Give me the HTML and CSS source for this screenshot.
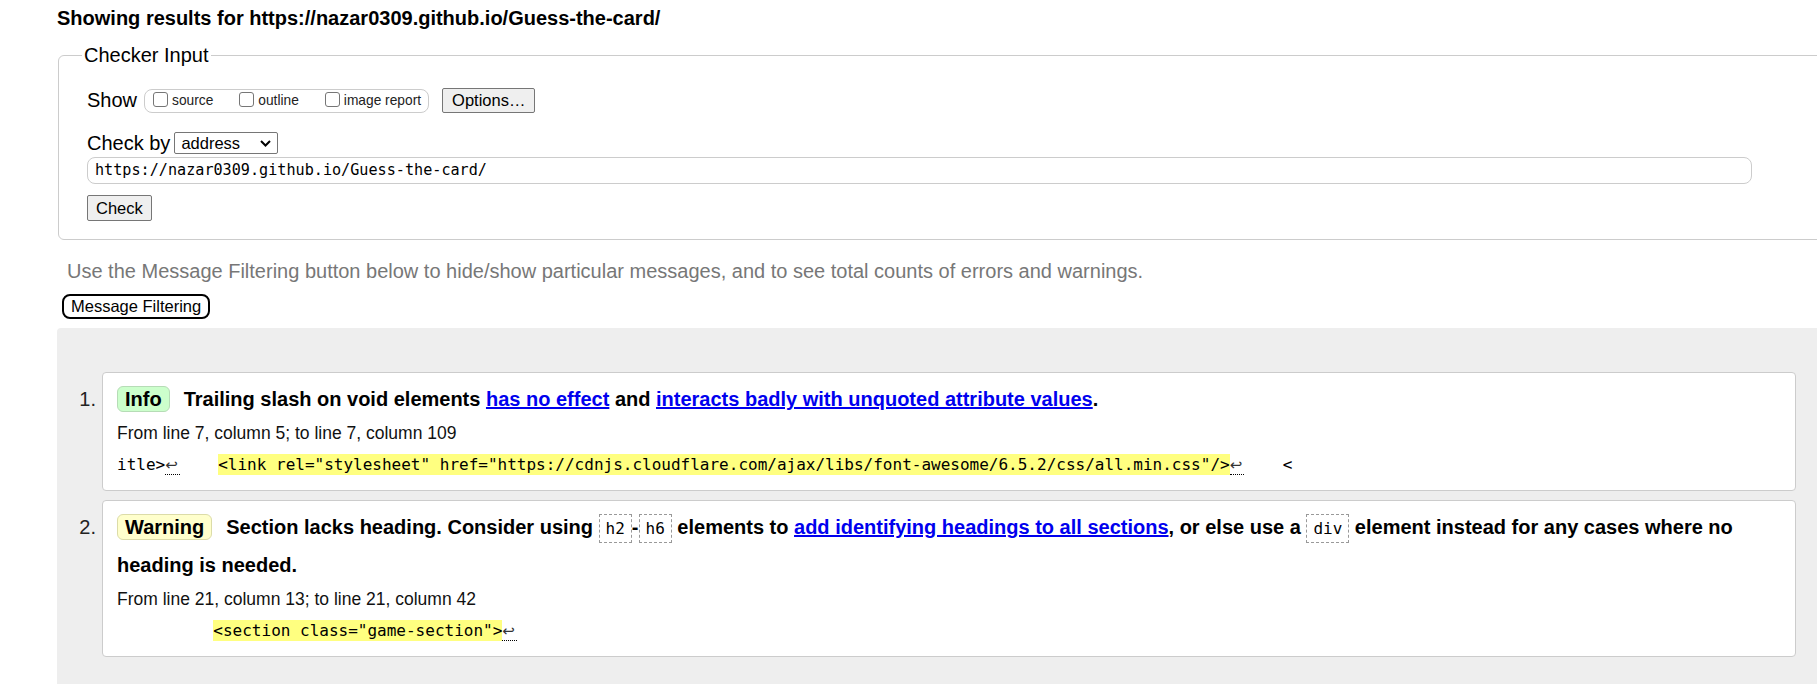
FILE: index.html
```html
<!DOCTYPE html>
<html lang="en">
<head>
<meta charset="utf-8">
<title>Showing results for https://nazar0309.github.io/Guess-the-card/</title>
<link rel="stylesheet" href="styles.css">
</head>
<body>
<div class="page">
  <h2 class="title">Showing results for https://nazar0309.github.io/Guess-the-card/</h2>
  <form class="checker-form">
    <fieldset class="checker">
      <legend class="legend">Checker Input</legend>
      <div class="row show-row">
        <span class="lbl">Show</span>
        <span class="group">
          <label class="opt"><input type="checkbox" class="cb">source</label>
          <label class="opt"><input type="checkbox" class="cb">outline</label>
          <label class="opt last"><input type="checkbox" class="cb">image report</label>
        </span>
        <button type="button" class="btn options">Options…</button>
      </div>
      <div class="row by-row">
        <span class="lbl">Check by</span>
        <span class="select"><span class="select-text">address</span><svg class="chev" width="11" height="7" viewBox="0 0 11 7"><path d="M1 1 L5.5 5.5 L10 1" fill="none" stroke="#000" stroke-width="2"/></svg></span>
      </div>
      <div class="url">https://nazar0309.github.io/Guess-the-card/</div>
      <button type="button" class="btn check">Check</button>
    </fieldset>
  </form>
  <p class="hint">Use the Message Filtering button below to hide/show particular messages, and to see total counts of errors and warnings.</p>
  <button type="button" class="filter">Message Filtering</button>
  <div class="results">
    <ol class="list">
      <li class="item">
        <span class="num">1.</span>
        <div class="msg">
          <p class="head"><span class="badge info">Info</span>Trailing slash on void elements <a class="link" href="#">has no effect</a> and <a class="link" href="#">interacts badly with unquoted attribute values</a>.</p>
          <p class="loc">From line 7, column 5; to line 7, column 109</p>
          <p class="extract">itle&gt;<span class="lf">↩</span>    <mark class="hl">&lt;link rel="stylesheet" href="https://cdnjs.cloudflare.com/ajax/libs/font-awesome/6.5.2/css/all.min.css"/&gt;</mark><span class="lf">↩</span>    &lt;</p>
        </div>
      </li>
      <li class="item">
        <span class="num">2.</span>
        <div class="msg">
          <p class="head"><span class="badge warning">Warning</span>Section lacks heading. Consider using <code class="tag">h2</code>-<code class="tag">h6</code> elements to <a class="link" href="#">add identifying headings to all sections</a>, or else use a <code class="tag">div</code> element instead for any cases where no heading is needed.</p>
          <p class="loc">From line 21, column 13; to line 21, column 42</p>
          <p class="extract">          <mark class="hl">&lt;section class="game-section"&gt;</mark><span class="lf">↩</span></p>
        </div>
      </li>
    </ol>
  </div>
</div>
</body>
</html>
```
FILE: styles.css
```css
* { box-sizing: border-box; }
html, body { margin: 0; padding: 0; background: #fff; overflow: hidden; }
body { font-family: "Liberation Sans", Arial, sans-serif; color: #000; }

.page { width: 1857px; padding: 7px 0 0 57px; }

.title { font-size: 20px; line-height: 23px; font-weight: bold; margin: 0 0 14px 0; }

.checker-form { margin: 0; }
.checker { margin: 0 0 0 1px; border: 1px solid #ccc; border-radius: 6px; padding: 21px 104px 18px 28px; min-width: 0; }
.legend { font-size: 20px; line-height: 23px; padding: 0 2px; margin-left: -5px; color: #000; }

.row { display: flex; align-items: center; }
.lbl { font-size: 20px; line-height: 23px; }
.show-row { height: 25px; }
.show-row .lbl { margin-right: 7px; }
.group { display: inline-flex; align-items: center; height: 24px; border: 1px solid #ccc; border-radius: 8px; padding: 0 7px 0 8px; }
.opt { display: inline-flex; align-items: baseline; font-size: 13.75px; line-height: 16px; color: #222; margin-right: 26px; }
.opt.last { margin-right: 0; }
.cb { appearance: none; -webkit-appearance: none; width: 15px; height: 15px; margin: 0 4px 0 0; border: 1px solid #767676; border-radius: 3px; background: #fff; align-self: center; position: relative; top: -1px; }

.btn { font-family: "Liberation Sans", Arial, sans-serif; font-size: 16.5px; color: #000; background: #efefef; border: 1px solid #767676; border-radius: 2px; padding: 0 9px; margin: 0; }
.options { height: 25px; margin-left: 13px; }

.by-row { margin-top: 19px; height: 22px; }
.select { display: inline-flex; align-items: center; justify-content: space-between; width: 104px; height: 22px; margin-left: 4px; border: 1px solid #767676; border-radius: 2px; padding: 0 6px 0 6px; font-size: 16.5px; background: #fff; }
.chev { display: block; }

.url { margin-top: 3px; width: 1665px; height: 27px; border: 1px solid #ccc; border-radius: 8px; padding: 0 7px; font-family: "DejaVu Sans Mono", monospace; font-size: 15.15px; line-height: 25px; color: #000; }

.check { display: block; height: 26px; margin-top: 11px; padding: 0 8px; }

.hint { margin: 20px 0 0 10px; font-size: 20px; line-height: 23px; color: #777; }

.filter { display: block; margin: 11px 0 0 5px; height: 25px; padding: 0 7px; border: 2px solid #000; border-radius: 8px; background: #fff; font-family: "Liberation Sans", Arial, sans-serif; font-size: 16.5px; color: #000; }

.results { margin-top: 9px; background: #eee; border-radius: 4px 0 0 0; padding: 44px 61px 40px 0; }
.list { list-style: none; margin: 0; padding: 0; }
.item { display: flex; margin-bottom: 9px; }
.num { flex: none; width: 45px; text-align: right; padding: 8px 6px 0 0; font-size: 20px; line-height: 39px; color: #222; }
.msg { flex: 1; min-width: 0; background: #fff; border: 1px solid #ccc; border-radius: 4px; padding: 7px 14px 13px 14px; }
.head { margin: 0; font-size: 20px; line-height: 38px; font-weight: bold; }
.badge { display: inline-block; line-height: 22px; padding: 1px 7px; border: 1px solid; border-radius: 6px; margin-right: 14px; }
.badge.info { background: #ccffcc; border-color: #b6dcb6; }
.badge.warning { background: #ffffcc; border-color: #dcdca8; }
.link { color: #0000ee; text-decoration: underline; }
.tag { font-family: "DejaVu Sans Mono", monospace; font-weight: normal; font-size: 16px; line-height: 16px; border: 1px dashed #999; padding: 4px 6px; }
.loc { margin: 5px 0 0 0; font-size: 17.5px; line-height: 20px; color: #111; }
.extract { margin: 10px 0 0 0; font-family: "DejaVu Sans Mono", monospace; font-size: 16px; line-height: 24px; white-space: pre; color: #000; }
.hl { background: #ffff80; color: #000; padding: 1px 0; }
.lf { display: inline-block; width: 14.5px; line-height: 18px; font-family: "DejaVu Sans", sans-serif; font-size: 15px; border-bottom: 1px dotted #000; color: #333; }
```
